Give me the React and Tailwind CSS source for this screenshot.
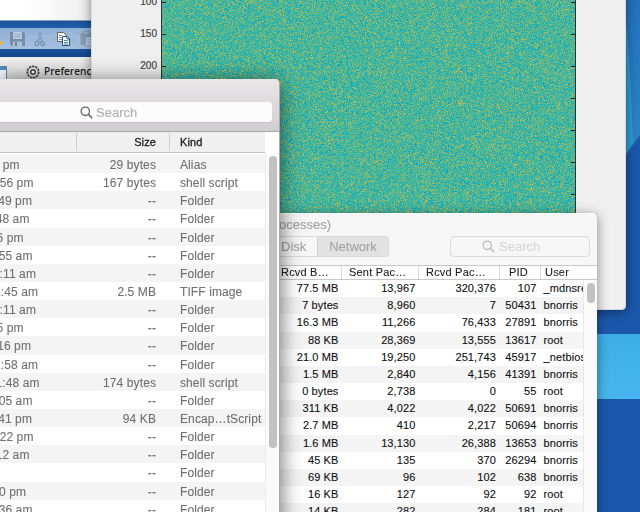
import React, { useEffect, useRef } from "react";

const FILES = [
  ["pm", 19.5, "29 bytes", "Alias"],
  [":56 pm", 33.5, "167 bytes", "shell script"],
  [":49 pm", 32, "--", "Folder"],
  [":48 am", 29.5, "--", "Folder"],
  ["6 pm", 23.5, "--", "Folder"],
  [":55 am", 32.5, "--", "Folder"],
  [":11 am", 36, "--", "Folder"],
  ["1:45 am", 38, "2.5 MB", "TIFF image"],
  [":11 am", 36, "--", "Folder"],
  ["5 pm", 23.5, "--", "Folder"],
  [":16 pm", 31, "--", "Folder"],
  ["1:58 am", 38, "--", "Folder"],
  ["1:48 am", 39.5, "174 bytes", "shell script"],
  [":05 am", 32.5, "--", "Folder"],
  [":41 pm", 32, "94 KB", "Encap…tScript"],
  [":22 pm", 33.5, "--", "Folder"],
  ["12 am", 29.5, "--", "Folder"],
  ["", 20, "--", "Folder"],
  ["0 pm", 26, "--", "Folder"],
  [":36 am", 32.5, "--", "Folder"],
];

const PROCESSES = [
  ["77.5 MB", "13,967", "320,376", "107", "_mdnsresponder"],
  ["7 bytes", "8,960", "7", "50431", "bnorris"],
  ["16.3 MB", "11,266", "76,433", "27891", "bnorris"],
  ["88 KB", "28,369", "13,555", "13617", "root"],
  ["21.0 MB", "19,250", "251,743", "45917", "_netbios"],
  ["1.5 MB", "2,840", "4,156", "41391", "bnorris"],
  ["0 bytes", "2,738", "0", "55", "root"],
  ["311 KB", "4,022", "4,022", "50691", "bnorris"],
  ["2.7 MB", "410", "2,217", "50694", "bnorris"],
  ["1.6 MB", "13,130", "26,388", "13653", "bnorris"],
  ["45 KB", "135", "370", "26294", "bnorris"],
  ["69 KB", "96", "102", "638", "bnorris"],
  ["16 KB", "127", "92", "92", "root"],
  ["14 KB", "282", "284", "181", "root"],
];

// Parula colour stops, sampled by a value between 0 and 1.
const PARULA = [
  [28, 124, 214],
  [14, 152, 206],
  [20, 172, 192],
  [40, 180, 174],
  [72, 184, 150],
  [122, 186, 122],
  [176, 184, 94],
  [228, 188, 66],
];

function Heatmap() {
  const ref = useRef(null);
  useEffect(() => {
    const ctx = ref.current.getContext("2d");
    const image = ctx.createImageData(413, 214);
    let seed = 20150;
    const next = () => {
      seed = (seed * 1664525 + 1013904223) >>> 0;
      return seed / 4294967296;
    };
    for (let i = 0; i < 413 * 214; i++) {
      const v = Math.max(0, Math.min(0.999, 0.55 + (next() + next() + next() - 1.5) * 0.34));
      const t = v * 7;
      const k = Math.floor(t);
      const f = t - k;
      for (let c = 0; c < 3; c++) {
        image.data[i * 4 + c] = PARULA[k][c] * (1 - f) + PARULA[k + 1][c] * f;
      }
      image.data[i * 4 + 3] = 255;
    }
    ctx.putImageData(image, 0, 0);
  }, []);
  return <canvas ref={ref} width="413" height="214" className="block" />;
}

function SearchIcon({ color }) {
  return (
    <svg width="13" height="13" viewBox="0 0 13 13" className="block shrink-0" fill="none" stroke={color} strokeWidth="1.3" strokeLinecap="round">
      <circle cx="5.300" cy="5.300" r="4.200" />
      <path d="M8.400 8.400l3.200 3.200" strokeWidth="1.500" />
    </svg>
  );
}

function ToolIcons() {
  return (
    <svg width="91" height="21" viewBox="0 28 91 21" className="block">
      <g fill="none" stroke="#fff" strokeOpacity=".16" strokeWidth=".7">
        <path d="M0 46q40-16 91-8M26 49q26-16 65-20M45 28q18 8 30 21M66 28q12 12 25 17" />
      </g>
      <path d="M0 41h2v4H0z" fill="#eab52e" />
      <g opacity=".6">
        <path d="M10 32h13q2 0 2 2v12H12l-2-2z" fill="#5d7288" />
        <path d="M13 32h9v7h-9z" fill="#cfdae5" />
        <path d="M14 34.500h7M14 36.500h7" stroke="#8095aa" strokeWidth=".7" />
        <path d="M13 41.500h9v4.500h-9z" fill="#b3c3d3" />
        <path d="M15 42h2v4h-2z" fill="#4f6377" />
      </g>
      <g fill="none" stroke="#6e849c" strokeWidth="1.200" opacity=".85">
        <path d="M38.500 32.500l3.800 9M41.300 32.500l-3.500 9" stroke="#8193a6" />
        <ellipse cx="37" cy="43.500" rx="1.800" ry="2.200" transform="rotate(25 37 43.500)" />
        <ellipse cx="42.500" cy="43.500" rx="1.600" ry="2.200" transform="rotate(-25 42.500 43.500)" />
      </g>
      <path d="M57.500 32.500h6l2.500 2.500v6.500h-8.500z" fill="#f6f8fa" stroke="#6b6251" />
      <path d="M59 35.500h3M59 37.500h3M59 39.500h3" stroke="#8f8f88" />
      <path d="M62.500 36.500h4.500l2.500 2.500v6.500h-7z" fill="#f4f9fd" stroke="#214f7c" />
      <path d="M64 40.500h4M64 42.500h4M64 44h4" stroke="#4a7dad" strokeWidth=".9" />
      <path d="M67 36.500v2.500h2.500" fill="none" stroke="#214f7c" strokeWidth=".8" />
      <g opacity=".5">
        <path d="M80.500 33h11v12H80.500z" fill="#77828e" />
        <path d="M83.500 31.500h6v3h-6z" fill="#a5b4c4" stroke="#63758a" strokeWidth=".7" />
        <path d="M85.500 37h7v9h-7z" fill="#dae4ef" stroke="#60758e" strokeWidth=".8" />
        <path d="M87 39.500h4M87 41.500h4M87 43.500h4" stroke="#8ba0b7" strokeWidth=".7" />
      </g>
    </svg>
  );
}

function EditorWindow() {
  return (
    <div className="absolute left-0 top-0 flex h-[90px] w-[92px] flex-col overflow-hidden bg-[#e6e6e6]">
      <div className="h-[20px] shrink-0 bg-linear-to-r from-white from-30% to-[#ededed]" />
      <div className="h-px shrink-0 bg-[#8d9fb5]" />
      <div className="h-[7px] shrink-0 bg-linear-to-b from-[#1c5399] to-[#1f5fa9]" />
      <div className="h-[21px] shrink-0 bg-linear-to-b from-[#8fafd6] to-[#a5bfe0]">
        <ToolIcons />
      </div>
      <div className="h-[8px] shrink-0 bg-linear-to-b from-[#1c559f] to-[#144689]" />
      <div className="flex h-[33px] shrink-0 items-start bg-linear-to-b from-[#f0f0f0] to-[#cccccc]">
        <div className="mt-[9px] h-[14px] w-[7px] shrink-0 border-y border-r border-[#6d8292] bg-[#f1f7fb]">
          <div className="h-[3px] bg-[#4b8ec4]" />
        </div>
        <svg width="14" height="14" viewBox="0 0 14 14" className="ml-[19px] mt-[8px] shrink-0">
          <circle cx="7" cy="7" r="5.800" fill="#f4f4f4" stroke="#4b4b4b" strokeWidth="1.600" strokeDasharray="2.300 .9" />
          <circle cx="7" cy="7" r="5" fill="#f4f4f4" stroke="#5a5a5a" strokeWidth=".8" />
          <circle cx="7" cy="7" r="2.300" fill="#fff" stroke="#3c3c3c" strokeWidth="1.500" />
        </svg>
        <span className="ml-[4px] mt-[7px] whitespace-nowrap font-['Open_Sans',sans-serif] text-[10.1px] font-semibold leading-[14px] text-[#222]">
          Preferences
        </span>
      </div>
    </div>
  );
}

function FigureWindow() {
  return (
    <div className="absolute left-[91px] top-[-20px] flex h-[330px] w-[535px] items-start overflow-hidden rounded-b-[4px] border border-[#d8d8d8] bg-[#efefef] shadow-[0_2px_12px_rgba(0,0,0,0.45)]">
      <div className="flex w-[69px] flex-col items-end pr-[4px] pt-[13px] font-['Liberation_Sans',Arial,sans-serif] text-[10px] leading-[16px] text-[#444] [-webkit-text-stroke:0.2px_#444]">
        <span className="mb-4">100</span>
        <span className="mb-4">150</span>
        <span>200</span>
      </div>
      <div className="relative mt-[19px] h-[215px] w-[415px] border-x border-[#333]">
        <Heatmap />
        <div className="absolute inset-y-0 left-0 flex w-full flex-col pt-[2px]">
          {[0, 1, 2, 3, 4, 5, 6].map((i) => (
            <div key={i} className="flex h-[32px] shrink-0 justify-between">
              <div className="h-px w-[4px] bg-[#222]" />
              <div className="h-px w-[4px] bg-[#222]" />
            </div>
          ))}
        </div>
      </div>
    </div>
  );
}

function ActivityWindow() {
  return (
    <div className="absolute left-[200px] top-[213px] flex h-[320px] w-[397px] flex-col overflow-hidden rounded-t-[5px] bg-[#f6f6f6] pl-[80px] font-['Liberation_Sans',Arial,sans-serif] shadow-[0_2px_12px_rgba(0,0,0,0.45)]">
      <div className="h-[52px] shrink-0 border-t border-white">
        <div className="-ml-px h-[22px] pt-[3px] text-[13px] leading-[16px] text-[#a0a0a0] [-webkit-text-stroke:0.1px_#a0a0a0]">ocesses)</div>
        <div className="flex items-center">
          <div className="flex h-[21px] w-[109px] overflow-hidden rounded-r-[4px] border border-l-0 border-[#d9d9d9] text-[13px] leading-[20px] text-[#a3a3a3] [-webkit-text-stroke:0.1px_#a3a3a3]">
            <span className="w-[37px] pl-px">Disk</span>
            <span className="grow border-l border-[#d4d4d4] bg-[#e2e2e2] text-center">Network</span>
          </div>
          <div className="ml-[61px] flex h-[21px] w-[140px] items-center rounded-[4px] border border-[#dadada] pl-[31px]">
            <SearchIcon color="#bdbdbd" />
            <span className="ml-[4px] text-[13px] leading-[19px] text-[#d6d6d6] [-webkit-text-stroke:0.1px_#d6d6d6]">Search</span>
          </div>
        </div>
      </div>
      <div className="flex h-[15px] shrink-0 items-center border-y border-[#c9c9c9] bg-white text-[11px] leading-[13px] tracking-[0.2px] text-[#222] [-webkit-text-stroke:0.1px_#222]">
        <span className="w-[62px] border-r border-[#d9d9d9] pl-px">Rcvd B…</span>
        <span className="w-[77px] border-r border-[#d9d9d9] pl-[7px]">Sent Pac…</span>
        <span className="w-[81px] border-r border-[#d9d9d9] pl-[7px]">Rcvd Pac…</span>
        <span className="w-[41px] border-r border-[#d9d9d9] pl-[9px]">PID</span>
        <span className="pl-[4px]">User</span>
      </div>
      <div className="flex">
        <div className="w-[303px] overflow-hidden">
          {PROCESSES.map(([bytes, sent, rcvd, pid, user], i) => (
            <div
              key={i}
              className="grid h-[17.18px] grid-cols-[58.5px_77px_80.5px_40.5px_46.5px] items-center bg-white text-right text-[11px] leading-[17px] tracking-[0.12px] text-[#111] even:bg-[#f4f4f4] [-webkit-text-stroke:0.12px_#111]"
            >
              <span>{bytes}</span>
              <span>{sent}</span>
              <span>{rcvd}</span>
              <span>{pid}</span>
              <span className="overflow-hidden pl-[7px] text-left">{user}</span>
            </div>
          ))}
        </div>
        <div className="flex grow justify-center border-l border-[#e8e8e8] bg-[#fafafa] pt-[3px]">
          <div className="h-[20px] w-[8px] rounded-full bg-[#c1c1c1]" />
        </div>
      </div>
    </div>
  );
}

function FinderWindow() {
  return (
    <div className="absolute -left-px top-[79px] flex h-[450px] w-[281px] flex-col overflow-hidden rounded-tr-[5px] border-r border-[#a8a8a8] bg-white pl-px font-['Liberation_Sans',Arial,sans-serif] shadow-[0_3px_22px_rgba(0,0,0,0.6)]">
      <div className="h-[53px] shrink-0 border-b border-[#a9a7a9] bg-linear-to-b from-[#e9e6e8] to-[#d0ced0] pt-[23px]">
        <div className="flex h-[21px] w-[272px] items-center rounded-r-[4px] border-b border-[#c4c2c4] bg-[#fcfcfc] pl-[80px] pt-px">
          <SearchIcon color="#666666" />
          <span className="ml-[3px] text-[13px] leading-[20px] text-[#b0b0b0] [-webkit-text-stroke:0.1px_#b0b0b0]">Search</span>
        </div>
      </div>
      <div className="flex h-[21px] w-[265px] shrink-0 items-center border-b border-[#c4c4c4] bg-[#f0f0f0] text-[11px] leading-[18px] tracking-[0.1px] text-[#222] [-webkit-text-stroke:0.3px_#222]">
        <span className="h-[18px] w-[77px] border-r border-[#cfcfcf]" />
        <span className="h-[18px] w-[93px] border-r border-[#cfcfcf] pr-[13px] text-right">Size</span>
        <span className="pl-[10px]">Kind</span>
      </div>
      <div className="flex grow">
        <div className="w-[265px] overflow-hidden pt-[2px]">
          {FILES.map(([time, end, size, kind], i) => (
            <div key={i} className="flex h-[18.15px] items-center whitespace-nowrap pt-[3px] text-[12px] leading-[15px] tracking-[0.1px] text-[#707070] odd:bg-[#f4f4f4] [-webkit-text-stroke:0.1px_#707070]">
              <div className="w-[77px] shrink-0 overflow-hidden">
                <div className="flex justify-end" style={{ width: end }}>
                  <span>{time}</span>
                </div>
              </div>
              <span className="w-[79px] shrink-0 text-right">{size}</span>
              <span className="pl-[24px]">{kind}</span>
            </div>
          ))}
        </div>
        <div className="flex grow justify-center border-l border-[#eaeaea] bg-[#fafafa] pt-[3px]">
          <div className="h-[292px] w-[8px] rounded-full bg-[#c1c1c1]" />
        </div>
      </div>
    </div>
  );
}

export default function App() {
  return (
    <div className="relative h-[512px] w-[640px] overflow-hidden bg-[#1b58ab]">
      <svg width="640" height="512" className="absolute inset-0">
        <defs>
          <linearGradient id="sky" x1="0" y1="0" x2="0" y2="1">
            <stop offset="0" stopColor="#2373bd" />
            <stop offset="1" stopColor="#2d84ca" />
          </linearGradient>
          <linearGradient id="band" x1="0" y1="0" x2="0" y2="1">
            <stop offset="0" stopColor="#3caee6" />
            <stop offset="1" stopColor="#48b6ee" />
          </linearGradient>
        </defs>
        <path d="M600 0h40v135l-15 21h-25z" fill="url(#sky)" />
        <path d="M625 15q5 35 8 128l-8 12z" fill="#2e9bd3" />
        <path d="M590 334h50v65h-50z" fill="url(#band)" />
      </svg>
      <EditorWindow />
      <FigureWindow />
      <ActivityWindow />
      <FinderWindow />
    </div>
  );
}
